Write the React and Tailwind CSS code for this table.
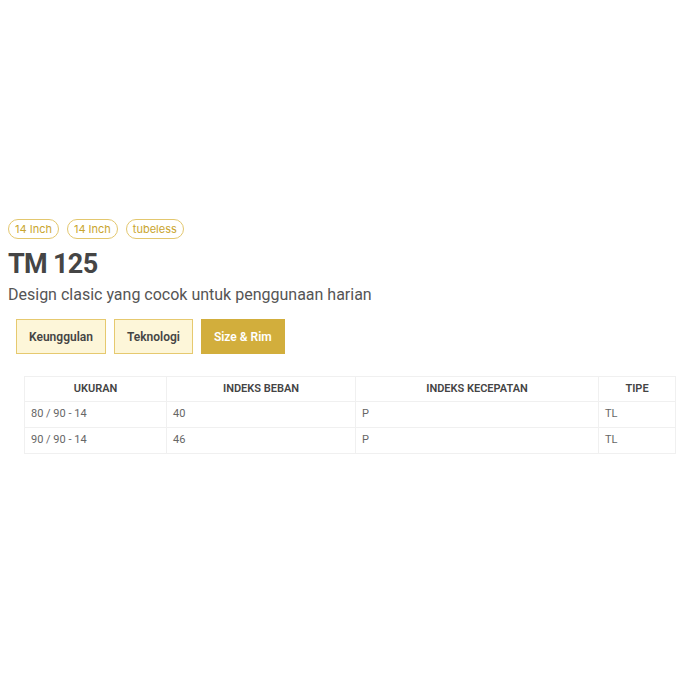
import React, { useState } from "react";

const tags = ["14 Inch", "14 Inch", "tubeless"];
const tabs = ["Keunggulan", "Teknologi", "Size & Rim"];
const rows = [
  ["80 / 90 - 14", "40", "P", "TL"],
  ["90 / 90 - 14", "46", "P", "TL"],
];

export default function App() {
  const [active, setActive] = useState(2);

  return (
    <div className="w-[700px] h-[700px] bg-white pt-[219px] font-['Roboto',sans-serif] text-[#444]">
      <div className="px-2">
        <div className="flex gap-2">
          {tags.map((t, i) => (
            <span
              key={i}
              className="h-[20px] px-[6px] flex items-center rounded-full border border-[#e3c76e] text-[11px] text-[#c9a52e] font-['Inter',sans-serif]"
            >
              {t}
            </span>
          ))}
        </div>
        <h1 className="mt-[8px] text-[27px] leading-[34px] font-bold tracking-tight text-[#454545]">
          TM 125
        </h1>
        <p className="mt-[4px] text-[16px] leading-[20px] text-[#555]">
          Design clasic yang cocok untuk penggunaan harian
        </p>
        <div className="mt-[14px] ml-2 flex gap-2">
          {tabs.map((t, i) => (
            <button
              key={t}
              onClick={() => setActive(i)}
              className={
                i === active
                  ? "h-[35px] px-3 border border-[#d2ae3c] bg-[#d2ae3c] text-white text-[12px] font-semibold"
                  : "h-[35px] px-3 border border-[#e6c96f] bg-[#fdf6d9] text-[#444] text-[12px] font-semibold"
              }
            >
              {t}
            </button>
          ))}
        </div>
        <div className="mt-[22px] ml-4 mr-4">
          <table className="w-[652px] border-collapse text-[11px]">
            <thead>
              <tr className="h-[25px]">
                <th className="w-[142px] border border-[#f0f0f0] font-semibold uppercase">Ukuran</th>
                <th className="w-[189px] border border-[#f0f0f0] font-semibold uppercase">Indeks Beban</th>
                <th className="w-[243px] border border-[#f0f0f0] font-semibold uppercase">Indeks Kecepatan</th>
                <th className="border border-[#f0f0f0] font-semibold uppercase">Tipe</th>
              </tr>
            </thead>
            <tbody>
              {rows.map((r, i) => (
                <tr key={i} className="h-[26px]">
                  {r.map((c, j) => (
                    <td key={j} className="border border-[#f0f0f0] px-[6px] text-[#666]">
                      {c}
                    </td>
                  ))}
                </tr>
              ))}
            </tbody>
          </table>
        </div>
      </div>
    </div>
  );
}
